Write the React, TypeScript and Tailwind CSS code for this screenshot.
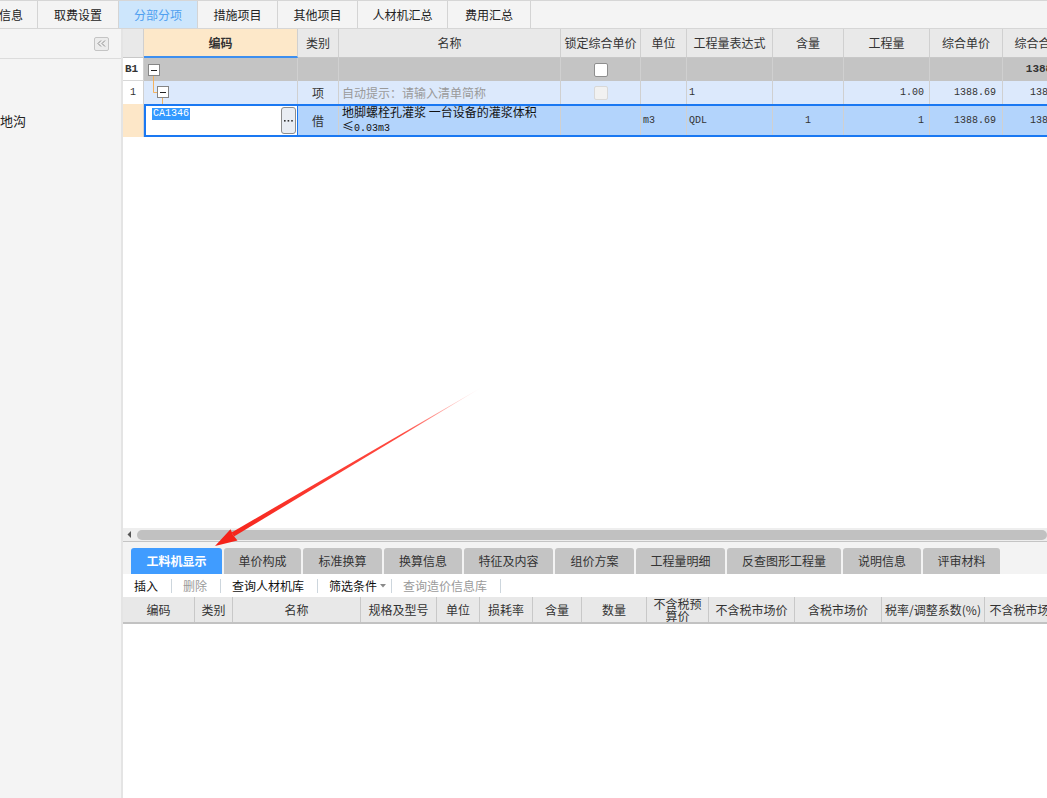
import React from "react";

const sans = "font-['Noto_Sans_CJK_SC',sans-serif]";
const mono = "font-['Liberation_Mono',monospace]";

const topTabs = [
  { label: "信息", cls: "w-[38px] justify-end pr-[14px]" },
  { label: "取费设置", cls: "w-[81px] justify-center" },
  { label: "分部分项", cls: "w-[79px] justify-center", active: true },
  { label: "措施项目", cls: "w-[80px] justify-center" },
  { label: "其他项目", cls: "w-[80px] justify-center" },
  { label: "人材机汇总", cls: "w-[90px] justify-center" },
  { label: "费用汇总", cls: "w-[83px] justify-center" },
];

const mainHead = [
  { w: "w-[21px]", label: "" },
  { w: "w-[154px]", label: "编码" },
  { w: "w-[41px]", label: "类别" },
  { w: "w-[222px]", label: "名称" },
  { w: "w-[80px]", label: "锁定综合单价" },
  { w: "w-[46px]", label: "单位" },
  { w: "w-[86px]", label: "工程量表达式" },
  { w: "w-[71px]", label: "含量" },
  { w: "w-[86px]", label: "工程量" },
  { w: "w-[73px]", label: "综合单价" },
  { w: "w-[72px]", label: "综合合价" },
];

const bottomTabs = [
  { label: "工料机显示", w: "w-[91px]", active: true },
  { label: "单价构成", w: "w-[77px]" },
  { label: "标准换算", w: "w-[79px]" },
  { label: "换算信息", w: "w-[78px]" },
  { label: "特征及内容", w: "w-[89px]" },
  { label: "组价方案", w: "w-[79px]" },
  { label: "工程量明细", w: "w-[89px]" },
  { label: "反查图形工程量", w: "w-[114px]" },
  { label: "说明信息", w: "w-[78px]" },
  { label: "评审材料", w: "w-[77px]" },
];

const bottomHead = [
  { w: "w-[72px]", label: "编码" },
  { w: "w-[38px]", label: "类别" },
  { w: "w-[128px]", label: "名称" },
  { w: "w-[76px]", label: "规格及型号" },
  { w: "w-[43px]", label: "单位" },
  { w: "w-[53px]", label: "损耗率" },
  { w: "w-[49px]", label: "含量" },
  { w: "w-[65px]", label: "数量" },
  { w: "w-[62px]", label: "不含税预\n算价" },
  { w: "w-[86px]", label: "不含税市场价" },
  { w: "w-[87px]", label: "含税市场价" },
  { w: "w-[103px]", label: "税率/调整系数(%)" },
  { w: "w-[106px]", label: "不含税市场价合计" },
];

function Cell({ w, className = "", children }: { w: string; className?: string; children?: React.ReactNode }) {
  return (
    <div className={`${w} relative flex h-full shrink-0 items-center whitespace-nowrap border-r border-[#d0d0d0] ${className}`}>
      {children}
    </div>
  );
}

function MinusBox({ x, y }: { x: number; y: number }) {
  return (
    <>
      <rect x={x + 0.5} y={y + 0.5} width={11} height={11} fill="#fff" stroke="#858585" />
      <line x1={x + 3} y1={y + 6.5} x2={x + 9} y2={y + 6.5} stroke="#222" />
    </>
  );
}

function TopTabs() {
  return (
    <div className="flex h-[29px] border-t border-b border-[#d6d6d6] bg-[#f4f4f4]">
      {topTabs.map((t) => (
        <div
          key={t.label}
          className={`${t.cls} flex h-full shrink-0 items-center overflow-hidden whitespace-nowrap border-r border-[#d4d4d4] text-[12px] leading-4 ${
            t.active ? "bg-[#cde6fc] text-[#4f9ff0]" : "text-[#222]"
          }`}
        >
          {t.label}
        </div>
      ))}
    </div>
  );
}

function Sidebar() {
  return (
    <div className="flex w-[123px] shrink-0 flex-col border-r-2 border-[#e4e4e4] bg-[#f4f4f4]">
      <div className="flex h-[30px] items-center justify-end border-b border-[#dcdcdc] pr-[12px]">
        <div className="flex h-[14px] w-[15px] items-center justify-center rounded-[2px] border border-[#c4c4c4] bg-[#ececec]">
          <svg width="9" height="7" viewBox="0 0 9 7">
            <path d="M4 0.5 L1 3.5 L4 6.5 M8 0.5 L5 3.5 L8 6.5" fill="none" stroke="#8a8a8a" />
          </svg>
        </div>
      </div>
      <div className="pt-[54px] text-[13px] leading-4 text-[#222]">地沟</div>
    </div>
  );
}

function MainGrid() {
  return (
    <div className="flex min-h-0 flex-1 flex-col overflow-hidden bg-white">
      {/* header */}
      <div className="flex h-[29px] shrink-0 bg-[#e9e9e9]">
        {mainHead.map((h) => (
          <Cell
            key={h.w + h.label}
            w={h.w}
            className={`justify-center leading-4 ${
              h.label === "编码"
                ? "border-b-2 border-b-[#3d8ff0] bg-[#fde8c9] font-bold"
                : "border-b border-b-[#c8c8c8]"
            }`}
          >
            {h.label}
          </Cell>
        ))}
      </div>

      {/* B1 */}
      <div className="flex h-[23px] shrink-0 bg-[#c4c4c4]">
        <Cell w="w-[21px]" className={`border-b border-b-[#d8d8d8] bg-white pl-[2px] text-[11px] font-bold ${mono}`}>B1</Cell>
        <Cell w="w-[154px]">
          <svg className="absolute left-0 top-0" width="154" height="23">
            <MinusBox x={4} y={6} />
            <line x1={9.5} y1={18} x2={9.5} y2={23} stroke="#f5b25c" />
          </svg>
        </Cell>
        <Cell w="w-[41px]" />
        <Cell w="w-[222px]" />
        <Cell w="w-[80px]" className="justify-center">
          <div className="h-[14px] w-[14px] rounded-[2px] border border-[#8e8e8e] bg-white" />
        </Cell>
        <Cell w="w-[46px]" />
        <Cell w="w-[86px]" />
        <Cell w="w-[71px]" />
        <Cell w="w-[86px]" />
        <Cell w="w-[73px]" />
        <Cell w="w-[72px]" className={`justify-end pr-[2px] text-[11px] font-bold ${mono}`}>1388.69</Cell>
      </div>

      {/* row 1 */}
      <div className="flex h-[23px] shrink-0 bg-[#dce9fc]">
        <Cell w="w-[21px]" className={`justify-center bg-white text-[10px] ${mono}`}>1</Cell>
        <Cell w="w-[154px]">
          <svg className="absolute left-0 top-0" width="154" height="23">
            <line x1={9.5} y1={0} x2={9.5} y2={11.5} stroke="#f5b25c" />
            <line x1={9.5} y1={11.5} x2={13} y2={11.5} stroke="#f5b25c" />
            <MinusBox x={13} y={5} />
            <line x1={18.5} y1={17} x2={18.5} y2={23} stroke="#f5b25c" />
          </svg>
        </Cell>
        <Cell w="w-[41px]" className="justify-center leading-4">项</Cell>
        <Cell w="w-[222px]" className="pl-[3px] leading-4 text-[#9a9a9a]">自动提示：请输入清单简称</Cell>
        <Cell w="w-[80px]" className="justify-center">
          <div className="h-[14px] w-[14px] rounded-[2px] border border-[#d8d8d8] bg-[#f1f1f1]" />
        </Cell>
        <Cell w="w-[46px]" />
        <Cell w="w-[86px]" className={`pl-[2px] text-[10px] ${mono}`}>1</Cell>
        <Cell w="w-[71px]" />
        <Cell w="w-[86px]" className={`justify-end pr-[5px] text-[10px] ${mono}`}>1.00</Cell>
        <Cell w="w-[73px]" className={`justify-end pr-[6px] text-[10px] ${mono}`}>1388.69</Cell>
        <Cell w="w-[72px]" className={`justify-end pr-[2px] text-[10px] ${mono}`}>1388.69</Cell>
      </div>

      {/* row 2, selected */}
      <div className="flex h-[33px] shrink-0">
        <Cell w="w-[21px]" className="bg-[#fde7c8]" />
        <div className="flex h-full border-y-2 border-[#1a78f2] bg-[#b3d4fc]">
          <Cell w="w-[154px]" className="items-start justify-between border-x-2 border-x-[#1a78f2] bg-white pl-[6px] pr-[1px] pt-[1px]">
            <span className={`mt-[1px] bg-[#3399ff] px-[1px] text-[10px] leading-[12px] text-white ${mono}`}>CA1346</span>
            <div className="flex h-[27px] w-[15px] shrink-0 items-center justify-center rounded-[3px] border border-[#8c8c8c] bg-[#e9edf3]">
              <svg width="9" height="3" viewBox="0 0 9 3">
                <rect x="0" y="1" width="1.6" height="1.6" fill="#333" />
                <rect x="3.6" y="1" width="1.6" height="1.6" fill="#333" />
                <rect x="7.2" y="1" width="1.6" height="1.6" fill="#333" />
              </svg>
            </div>
          </Cell>
          <Cell w="w-[41px]" className="justify-center leading-4">借</Cell>
          <Cell w="w-[222px]" className="pl-[3px] leading-[14px] text-[#111]">
            <div>
              地脚螺栓孔灌浆 一台设备的灌浆体积
              <br />
              <span>≤</span>
              <span className={`text-[10px] ${mono}`}>0.03m3</span>
            </div>
          </Cell>
          <Cell w="w-[80px]" />
          <Cell w="w-[46px]" className={`pl-[2px] text-[10px] ${mono}`}>m3</Cell>
          <Cell w="w-[86px]" className={`pl-[2px] text-[10px] ${mono}`}>QDL</Cell>
          <Cell w="w-[71px]" className={`justify-center text-[10px] ${mono}`}>1</Cell>
          <Cell w="w-[86px]" className={`justify-end pr-[5px] text-[10px] ${mono}`}>1</Cell>
          <Cell w="w-[73px]" className={`justify-end pr-[6px] text-[10px] ${mono}`}>1388.69</Cell>
          <Cell w="w-[72px]" className={`justify-end pr-[2px] text-[10px] ${mono}`}>1388.69</Cell>
        </div>
      </div>
      <div className="flex-1" />
    </div>
  );
}

function Scrollbar() {
  return (
    <div className="flex h-[13px] shrink-0 items-center bg-[#eeeeee] pl-[4px]">
      <svg width="5" height="7" viewBox="0 0 5 7">
        <path d="M4 0 L0.5 3.5 L4 7 Z" fill="#555" />
      </svg>
      <div className="ml-[5px] h-[10px] flex-1 rounded-full bg-[#c1c1c1]" />
    </div>
  );
}

function BottomPanel() {
  return (
    <div className="flex h-[257px] shrink-0 flex-col border-t border-[#c4c4c4]">
      <div className="flex h-[32px] items-end gap-[2px] bg-[#f3f3f3] pl-[8px]">
        {bottomTabs.map((t) => (
          <div
            key={t.label}
            className={`${t.w} flex h-[26px] shrink-0 items-center justify-center rounded-t-[3px] text-[12px] leading-4 ${
              t.active ? "bg-[#409cff] font-bold text-white" : "bg-[#c4c4c4] text-[#333]"
            }`}
          >
            {t.label}
          </div>
        ))}
      </div>

      <div className="flex h-[23px] shrink-0 items-center bg-white pl-[11px] text-[12px] leading-4">
        <span className="text-[#111]">插入</span>
        <span className="ml-[13px] mr-[11px] h-[14px] w-px bg-[#cdd6dd]" />
        <span className="text-[#9a9a9a]">删除</span>
        <span className="ml-[13px] mr-[11px] h-[14px] w-px bg-[#cdd6dd]" />
        <span className="text-[#111]">查询人材机库</span>
        <span className="ml-[13px] mr-[11px] h-[14px] w-px bg-[#cdd6dd]" />
        <span className="text-[#111]">筛选条件</span>
        <svg className="ml-[3px]" width="6" height="4" viewBox="0 0 6 4">
          <path d="M0 0 L6 0 L3 3.5 Z" fill="#8a8a8a" />
        </svg>
        <span className="ml-[5px] mr-[11px] h-[14px] w-px bg-[#cdd6dd]" />
        <span className="text-[#9a9a9a]">查询造价信息库</span>
        <span className="ml-[13px] h-[14px] w-px bg-[#cdd6dd]" />
      </div>

      <div className="flex h-[27px] shrink-0 border-b-2 border-[#c2c2c2] bg-[#e8e8e8]">
        {bottomHead.map((h) => (
          <div
            key={h.label}
            className={`${h.w} flex h-full shrink-0 items-center justify-center whitespace-pre-line border-r border-[#c8c8c8] text-center text-[12px] ${
              h.label.includes("\n") ? "leading-[12px]" : "leading-4"
            }`}
          >
            {h.label}
          </div>
        ))}
      </div>
      <div className="flex-1 bg-white" />
    </div>
  );
}

function Arrow() {
  return (
    <svg className="pointer-events-none absolute left-0 top-0" width="1047" height="798" viewBox="0 0 1047 798">
      <defs>
        <linearGradient id="redfade" gradientUnits="userSpaceOnUse" x1="483" y1="386" x2="215" y2="546">
          <stop offset="0" stopColor="#ff2a1f" stopOpacity="0" />
          <stop offset="0.3" stopColor="#ff2a1f" stopOpacity="0.85" />
          <stop offset="1" stopColor="#f5231a" stopOpacity="1" />
        </linearGradient>
      </defs>
      <polygon points="483.5,386.3 234,536.5 231.6,532.4" fill="url(#redfade)" />
      <polygon points="215,546 237.5,540.5 233,535 230.5,529.3" fill="#f5231a" />
    </svg>
  );
}

export default function App() {
  return (
    <div className={`relative h-[798px] w-[1047px] overflow-hidden bg-white text-[12px] text-[#333] ${sans}`}>
      <TopTabs />
      <div className="flex h-[769px]">
        <Sidebar />
        <div className="flex min-w-0 flex-1 flex-col overflow-hidden">
          <MainGrid />
          <Scrollbar />
          <BottomPanel />
        </div>
      </div>
      <Arrow />
    </div>
  );
}
